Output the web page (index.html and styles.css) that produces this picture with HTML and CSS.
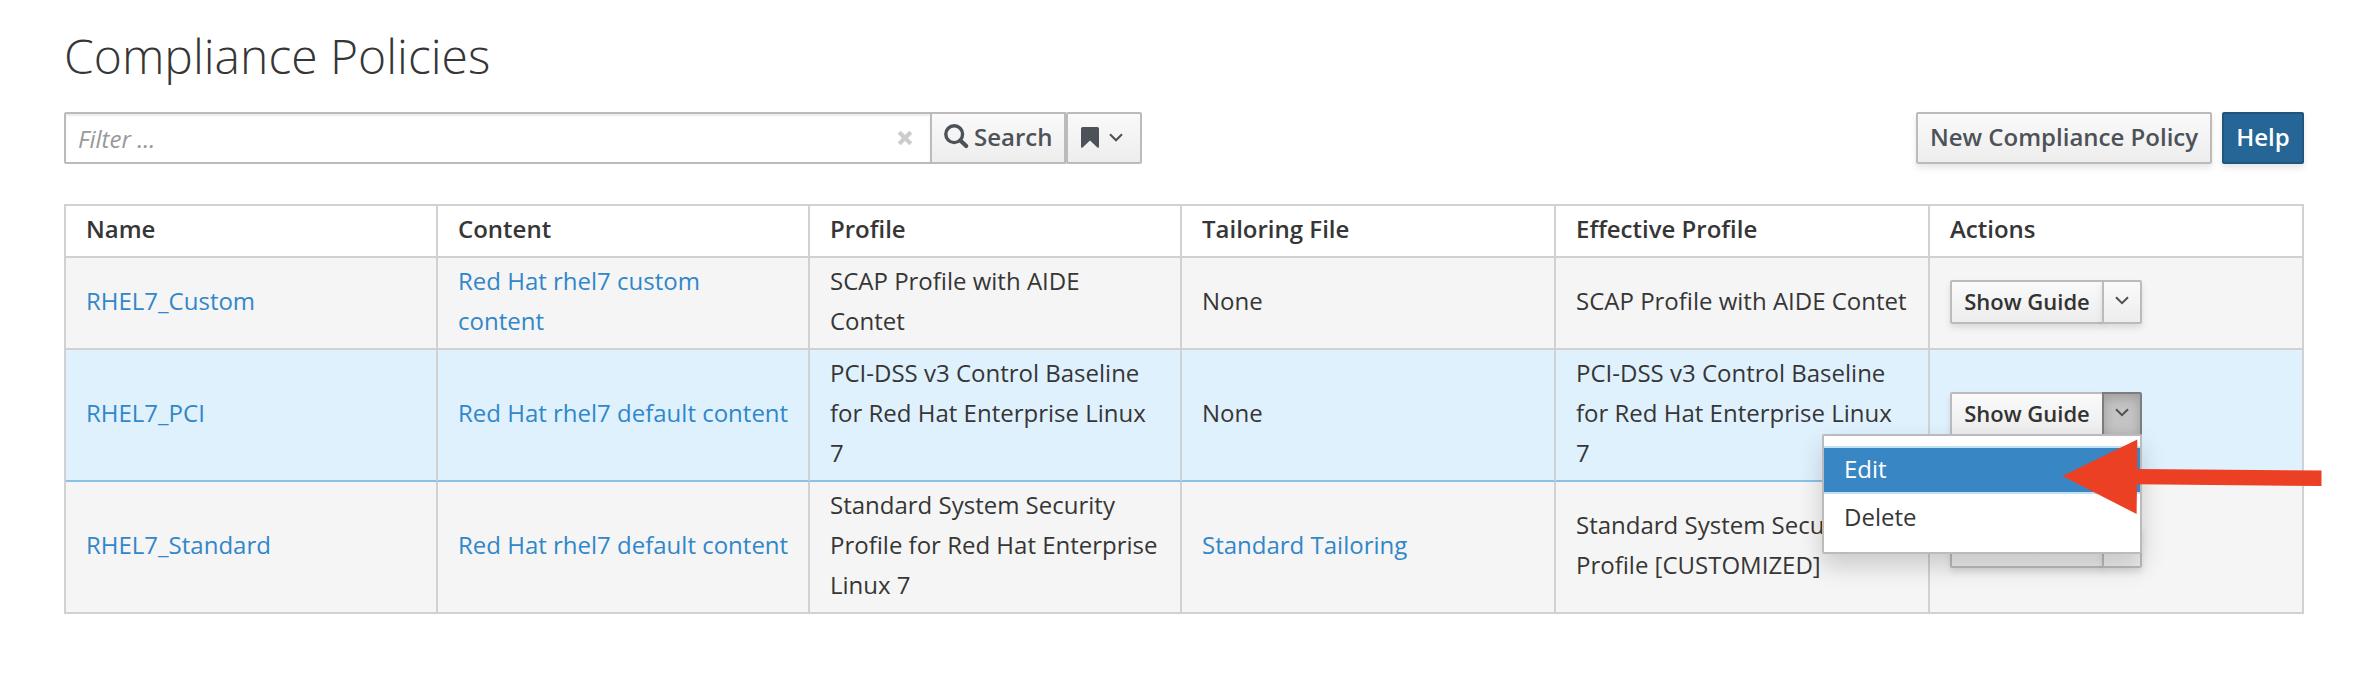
FILE: index.html
```html
<!DOCTYPE html>
<html lang="en">
<head>
<meta charset="utf-8">
<title>Compliance Policies</title>
<link rel="stylesheet" href="styles.css">
</head>
<body>
<main class="page">
  <h1 class="title">Compliance Policies</h1>
  <div class="toolbar">
    <form class="search">
      <div class="search-field">
        <span class="placeholder">Filter ...</span>
        <svg class="clear" width="16" height="16" viewBox="0 0 16 16"><path d="M2.2 2.2 13.8 13.8M13.8 2.2 2.2 13.8" stroke="#ccc" stroke-width="4.2"/></svg>
      </div>
      <button type="button" class="btn btn-search">
        <svg width="26" height="26" viewBox="0 0 26 26" fill="none" stroke="#4d5258"><circle cx="10.2" cy="10.2" r="8.4" stroke-width="3.4"/><path d="M16.4 16.4 22.2 22" stroke-width="4.2" stroke-linecap="round"/></svg>
        <span>Search</span>
      </button>
      <button type="button" class="btn btn-bookmark">
        <svg width="18" height="21" viewBox="0 0 18 21"><path d="M1.8 0h14.4Q18 0 18 1.8v18.4q-.6.8-1.6.2L9 13.4l-7.4 7q-1 .6-1.6-.2V1.8Q0 0 1.8 0Z" fill="#4d5258"/></svg>
        <svg width="14" height="9" viewBox="0 0 14 9"><path d="M1 1.2 7 7.2 13 1.2" fill="none" stroke="#4d5258" stroke-width="2.1"/></svg>
      </button>
    </form>
    <div class="actions">
      <button type="button" class="btn btn-new">New Compliance Policy</button>
      <button type="button" class="btn btn-help">Help</button>
    </div>
  </div>
  <table class="policies">
    <colgroup><col class="narrow"><col class="narrow"><col class="narrow"><col class="wide"><col class="wide"><col class="wide"></colgroup>
    <thead>
      <tr><th>Name</th><th>Content</th><th>Profile</th><th>Tailoring File</th><th>Effective Profile</th><th>Actions</th></tr>
    </thead>
    <tbody>
      <tr>
        <td><a>RHEL7_Custom</a></td>
        <td><a>Red Hat rhel7 custom<br>content</a></td>
        <td>SCAP Profile with AIDE<br>Contet</td>
        <td>None</td>
        <td>SCAP Profile with AIDE Contet</td>
        <td class="controls"><div class="group"><button type="button" class="btn guide">Show Guide</button><button type="button" class="btn caret"><svg width="14" height="9" viewBox="0 0 14 9"><path d="M1 1.2 7 7.2 13 1.2" fill="none" stroke="#4d5258" stroke-width="2"/></svg></button></div></td>
      </tr>
      <tr class="hovered">
        <td><a>RHEL7_PCI</a></td>
        <td><a>Red Hat rhel7 default content</a></td>
        <td>PCI-DSS v3 Control Baseline<br>for Red Hat Enterprise Linux<br>7</td>
        <td>None</td>
        <td>PCI-DSS v3 Control Baseline<br>for Red Hat Enterprise Linux<br>7</td>
        <td class="controls"><div class="group open"><button type="button" class="btn guide">Show Guide</button><button type="button" class="btn caret"><svg width="14" height="9" viewBox="0 0 14 9"><path d="M1 1.2 7 7.2 13 1.2" fill="none" stroke="#4d5258" stroke-width="2"/></svg></button>
          <ul class="menu"><li class="active">Edit</li><li>Delete</li></ul></div></td>
      </tr>
      <tr>
        <td><a>RHEL7_Standard</a></td>
        <td><a>Red Hat rhel7 default content</a></td>
        <td>Standard System Security<br>Profile for Red Hat Enterprise<br>Linux 7</td>
        <td><a>Standard Tailoring</a></td>
        <td>Standard System Security<br>Profile [CUSTOMIZED]</td>
        <td class="controls"><div class="group"><button type="button" class="btn guide">Show Guide</button><button type="button" class="btn caret"><svg width="14" height="9" viewBox="0 0 14 9"><path d="M1 1.2 7 7.2 13 1.2" fill="none" stroke="#4d5258" stroke-width="2"/></svg></button></div></td>
      </tr>
    </tbody>
  </table>
</main>
<svg class="pointer" width="262" height="78" viewBox="0 0 262 78"><path d="M2.4 38 77.3 1.5V31L261.5 32.5V48L77 46.3 76.6 76Z" fill="#ec4024"/></svg>
</body>
</html>
```

FILE: styles.css
```css
* { box-sizing: border-box; }
body {
  margin: 0;
  background: #fff;
  color: #363636;
  font: 24px/40px "Open Sans", sans-serif;
}
.page { padding: 23px 64px 0; }
.title {
  margin: 0 0 23px;
  font-size: 48px;
  font-weight: 300;
  line-height: 66px;
}
.toolbar {
  display: flex;
  justify-content: space-between;
  margin-bottom: 40px;
}
.search { display: flex; }
.search-field {
  display: flex;
  align-items: center;
  justify-content: space-between;
  width: 868px;
  height: 52px;
  padding: 0 17px 0 12px;
  border: 2px solid #bbb;
  border-radius: 2px 0 0 2px;
  box-shadow: inset 0 2px 2px rgba(3, 3, 3, .075);
}
.placeholder { color: #999; font-style: italic; padding-top: 2px; }
.btn {
  height: 52px;
  padding: 0;
  border: 2px solid #bbb;
  border-radius: 2px;
  background: linear-gradient(#fafafa, #ededed);
  color: #4d5258;
  font: 600 24px/46px "Open Sans", sans-serif;
  white-space: nowrap;
}
.btn-search {
  display: flex;
  width: 136px;
  margin-left: -2px;
  padding-left: 12px;
  gap: 4px;
  border-radius: 0;
}
.btn-search svg { margin-top: 10px; }
.btn-bookmark {
  display: flex;
  width: 76px;
  padding: 13px 0 0 13px;
  gap: 10px;
}
.btn-bookmark svg + svg { margin-top: 6px; }
.actions { display: flex; gap: 10px; }
.actions .btn { padding-bottom: 2px; box-shadow: 0 4px 6px rgba(3, 3, 3, .1); }
.btn-new { width: 296px; }
.actions .btn-help {
  width: 82px;
  border-color: #1f5680;
  background: #266697;
  color: #fff;
}
.policies {
  width: 2240px;
  table-layout: fixed;
  border-collapse: separate;
  border-spacing: 0;
  border: solid #d1d1d1;
  border-width: 2px 0 0 2px;
}
.narrow { width: 372px; }
.wide { width: 374px; }
th, td {
  padding: 3px 0 7px 20px;
  border: solid #d1d1d1;
  border-width: 0 2px 2px 0;
  text-align: left;
  vertical-align: middle;
  white-space: nowrap;
}
th { font-weight: 600; }
td { background: #f5f5f5; }
.controls { padding: 4px 0 6px 20px; }
a { color: #3187c9; }
.hovered td { background: #e0f1fe; border-bottom-color: #8ac2e7; }
.group {
  position: relative;
  display: flex;
  width: 192px;
}
.group .btn {
  height: 44px;
  font-size: 22px;
  line-height: 38px;
  box-shadow: 0 4px 6px rgba(3, 3, 3, .1);
}
.group .guide {
  width: 154px;
  padding-bottom: 2px;
  color: #333;
  border-radius: 2px 0 0 2px;
}
.group .caret {
  display: flex;
  justify-content: center;
  width: 40px;
  margin-left: -2px;
  padding-top: 14px;
  border-radius: 0 2px 2px 0;
}
.group.open .caret {
  border-color: #7d7d7d;
  background: #c4c4c4;
  box-shadow: inset 0 4px 12px rgba(0, 0, 0, .2);
}
.menu {
  position: absolute;
  top: 42px;
  right: 0;
  z-index: 2;
  width: 320px;
  height: 120px;
  margin: 0;
  padding: 10px 0;
  list-style: none;
  background: #fff;
  border: 2px solid #bbb;
  border-radius: 2px;
  box-shadow: 0 12px 24px rgba(0, 0, 0, .175);
}
.menu li {
  height: 48px;
  padding: 0 20px;
  border: solid transparent;
  border-width: 2px 0;
  line-height: 42px;
}
.menu .active { background: #3986c5; border-color: #bee1f4; color: #fff; }
.pointer {
  position: absolute;
  left: 2060px;
  top: 438px;
  z-index: 3;
}
```
